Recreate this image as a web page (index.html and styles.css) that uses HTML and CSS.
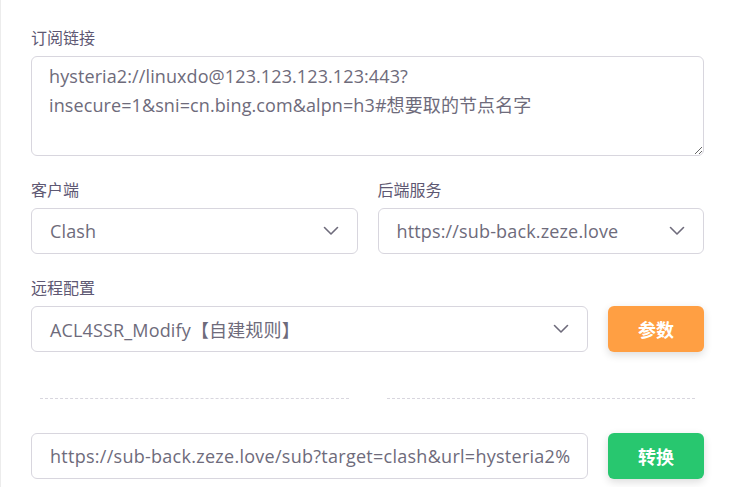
FILE: index.html
```html
<!DOCTYPE html>
<html lang="zh">
<head>
<meta charset="utf-8">
<title>订阅转换</title>
<link rel="stylesheet" href="styles.css">
</head>
<body>
<div class="page">
  <div class="field">
    <label class="label">订阅链接</label>
    <textarea class="textarea">hysteria2://linuxdo@123.123.123.123:443?
insecure=1&amp;sni=cn.bing.com&amp;alpn=h3#想要取的节点名字</textarea>
  </div>

  <div class="grid2">
    <div class="field">
      <label class="label">客户端</label>
      <div class="select"><span>Clash</span>
        <svg class="chev" viewBox="0 0 16 10" width="16" height="10"><path d="M1.5 1.5 L8 8 L14.5 1.5" fill="none" stroke="#6e6b7b" stroke-width="1.6" stroke-linecap="round" stroke-linejoin="round"/></svg>
      </div>
    </div>
    <div class="field">
      <label class="label">后端服务</label>
      <div class="select"><span>https://sub-back.zeze.love</span>
        <svg class="chev" viewBox="0 0 16 10" width="16" height="10"><path d="M1.5 1.5 L8 8 L14.5 1.5" fill="none" stroke="#6e6b7b" stroke-width="1.6" stroke-linecap="round" stroke-linejoin="round"/></svg>
      </div>
    </div>
  </div>

  <div class="field">
    <label class="label">远程配置</label>
    <div class="row">
      <div class="select grow"><span>ACL4SSR_Modify【自建规则】</span>
        <svg class="chev" viewBox="0 0 16 10" width="16" height="10"><path d="M1.5 1.5 L8 8 L14.5 1.5" fill="none" stroke="#6e6b7b" stroke-width="1.6" stroke-linecap="round" stroke-linejoin="round"/></svg>
      </div>
      <button class="btn btn-orange">参数</button>
    </div>
  </div>

  <div class="grid2 dividers">
    <div class="dash"></div>
    <div class="dash"></div>
  </div>

  <div class="row">
    <div class="input grow">https://sub-back.zeze.love/sub?target=clash&amp;url=hysteria2%</div>
    <button class="btn btn-green">转换</button>
  </div>
</div>
</body>
</html>
```
FILE: styles.css
```css
html, body {
  margin: 0;
  padding: 0;
  background: #ffffff;
}
body {
  font-family: "Open Sans", "Noto Sans CJK SC", sans-serif;
  color: #6e6b7b;
  border-left: 1px solid #ececec;
  min-height: 487px;
  box-sizing: border-box;
}
.page {
  padding: 28px 26px 0 30px;
}
.field {
  display: flex;
  flex-direction: column;
}
.label {
  font-size: 16px;
  line-height: 20px;
  color: #5e5873;
  margin-bottom: 8px;
}
.textarea {
  box-sizing: border-box;
  width: 100%;
  height: 100px;
  border: 1px solid #d8d6de;
  border-radius: 6px;
  padding: 5px 17px;
  font-family: "Open Sans", "Noto Sans CJK SC", sans-serif;
  font-size: 18px;
  line-height: 29px;
  letter-spacing: 0.1px;
  color: #6e6b7b;
  resize: vertical;
  outline: none;
  margin: 0 0 24px 0;
  display: block;
}
.grid2 {
  display: grid;
  grid-template-columns: 1fr 1fr;
  gap: 20px;
  margin-bottom: 24px;
}
.select, .input {
  box-sizing: border-box;
  height: 46px;
  border: 1px solid #d8d6de;
  border-radius: 6px;
  padding: 0 18px;
  display: flex;
  align-items: center;
  justify-content: space-between;
  font-size: 18px;
  letter-spacing: 0.15px;
  color: #6e6b7b;
  background: #fff;
  white-space: nowrap;
  overflow: hidden;
}
.input {
  letter-spacing: 0.27px;
}
.chev {
  flex: none;
}
.row {
  display: flex;
  gap: 20px;
  align-items: center;
}
.grow {
  flex: 1;
  min-width: 0;
}
.btn {
  flex: none;
  width: 96px;
  height: 46px;
  border: none;
  border-radius: 6px;
  color: #fff;
  font-family: "Open Sans", "Noto Sans CJK SC", sans-serif;
  font-size: 18px;
  font-weight: 700;
  box-shadow: 0 3px 8px rgba(0, 0, 0, 0.14);
}
.btn-orange { background: #ff9f43; }
.btn-green { background: #28c76f; }
.dividers {
  margin: 46px 0 34px 0;
}
.dash {
  border-top: 1px dashed #d8d6de;
  margin: 0 9px;
}
```
